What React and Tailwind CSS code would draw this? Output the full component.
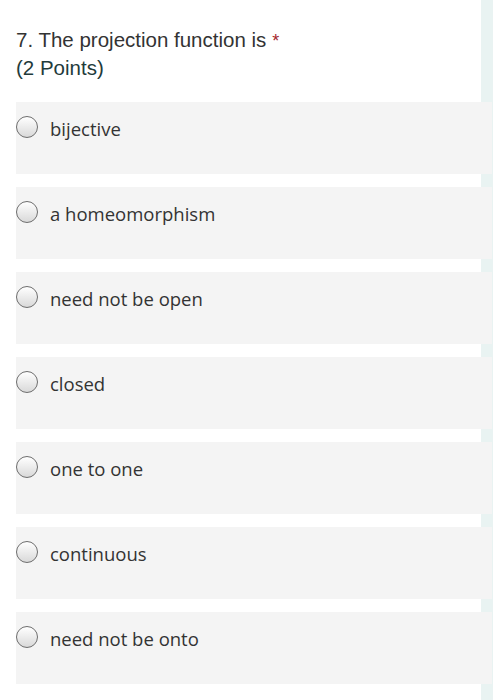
export default function App() {
  const options = [
    "bijective",
    "a homeomorphism",
    "need not be open",
    "closed",
    "one to one",
    "continuous",
    "need not be onto",
  ];

  return (
    <div className="relative h-[700px] w-[502px] overflow-hidden bg-white">
      {/* right track */}
      <div className="absolute right-[9px] top-0 h-full w-[12px] bg-[#e9f3f2]" />

      <div className="relative pl-4 pr-[10px] pt-[26px]">
        <div className="font-['Liberation_Sans',Arial,sans-serif] text-[20.5px] leading-[28px] text-[#333333]">
          <div className="h-[28px]">
            7. The projection function is
            <span className="ml-[6px] text-[18px] leading-none text-[#a4262c]">*</span>
          </div>
          <div className="text-[#1f3b3b]">(2 Points)</div>
        </div>

        <div className="mt-[20px] flex flex-col gap-[13px]">
          {options.map((o) => (
            <label
              key={o}
              className="flex h-[72px] items-start bg-[#f4f4f4] font-['Open_Sans','Noto_Sans',sans-serif] text-[18.5px] leading-[24px] text-[#333333]"
            >
              <span className="mt-[14px] block h-[22px] w-[22px] shrink-0 rounded-full border border-[#6e6e6e] bg-gradient-to-b from-[#ffffff] to-[#d9d9d9]" />
              <span className="ml-[12px] mt-[15px]">{o}</span>
            </label>
          ))}
        </div>
      </div>
    </div>
  );
}
